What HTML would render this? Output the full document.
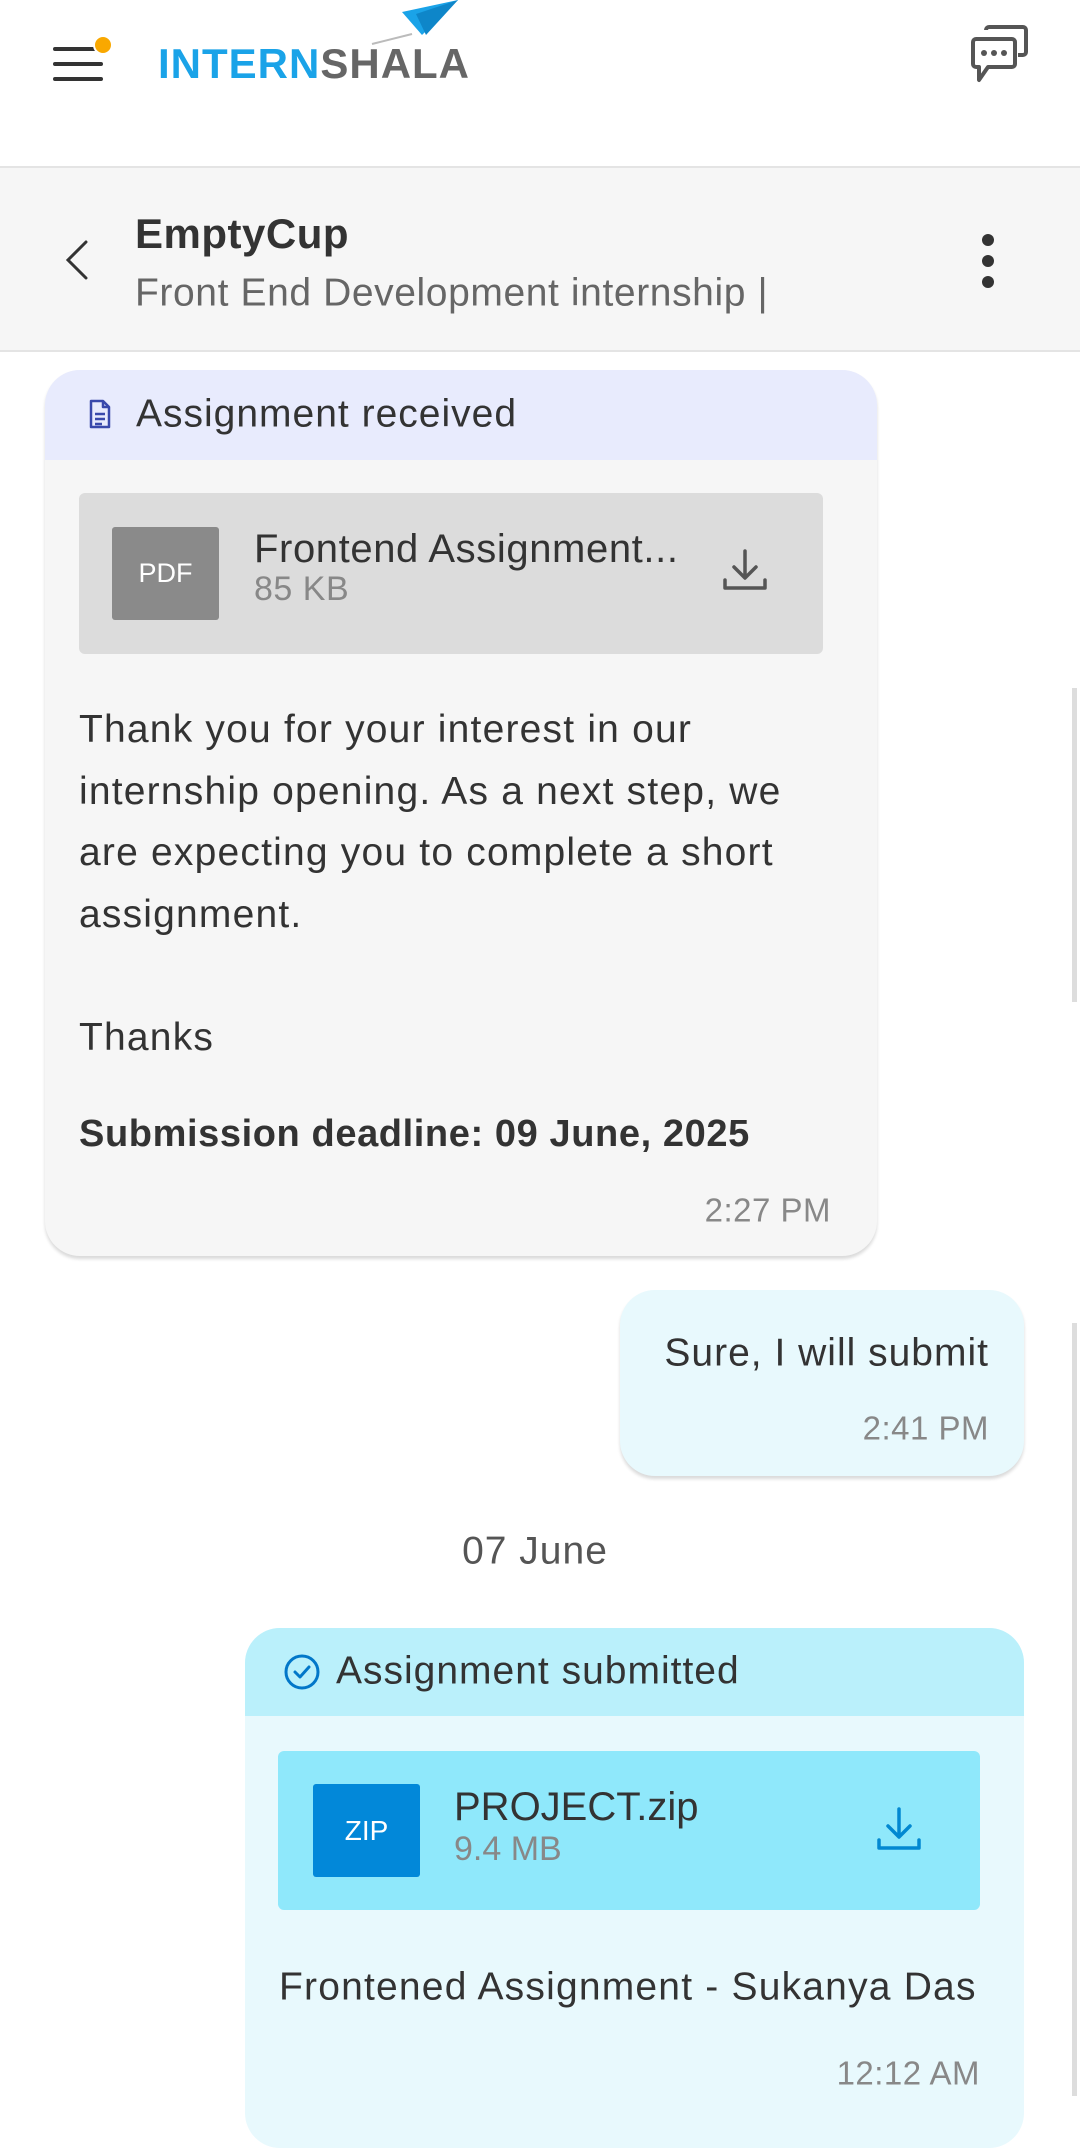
<!DOCTYPE html>
<html><head><meta charset="utf-8"><style>
*{margin:0;padding:0;box-sizing:border-box}
body{width:1080px;height:2096px;overflow:hidden;background:#fff;font-family:"Liberation Sans",sans-serif;color:#222;position:relative}
.a{position:absolute;white-space:nowrap}
.t{line-height:1;transform:translateY(-50%)}
</style></head><body>
<!-- top bar -->
<div class="a" style="left:53px;top:47px;width:50px;height:4px;background:#333;border-radius:2px"></div>
<div class="a" style="left:53px;top:62px;width:50px;height:4px;background:#333;border-radius:2px"></div>
<div class="a" style="left:53px;top:77px;width:50px;height:4px;background:#333;border-radius:2px"></div>
<div class="a" style="left:93px;top:35px;width:20px;height:20px;background:#f9a800;border-radius:50%;border:2px solid #fff"></div>
<div class="a t" style="left:158px;top:64px;font-size:42px;font-weight:bold;letter-spacing:1px"><span style="color:#1aa3e8">INTERN</span><span style="color:#666">SHALA</span></div>
<svg class="a" style="left:360px;top:0" width="100" height="50" viewBox="0 0 100 50"><polygon points="42,12 98,0 62,35" fill="#1aa3e8"/><polygon points="56,14 98,0 66,35" fill="#0e86c9"/><line x1="12" y1="44" x2="52" y2="34" stroke="#bbb" stroke-width="2"/></svg>
<svg class="a" style="left:968px;top:24px" width="64" height="64" viewBox="0 0 64 64" fill="none" stroke="#555" stroke-width="4" stroke-linejoin="round"><path d="M18 6a3 3 0 0 1 3-3h34a3 3 0 0 1 3 3v22a3 3 0 0 1-3 3h-5"/><path d="M5 18a3 3 0 0 1 3-3h36a3 3 0 0 1 3 3v22a3 3 0 0 1-3 3H20l-9 13v-13H8a3 3 0 0 1-3-3z" fill="#fff"/><circle cx="16" cy="29" r="3" fill="#555" stroke="none"/><circle cx="26" cy="29" r="3" fill="#555" stroke="none"/><circle cx="36" cy="29" r="3" fill="#555" stroke="none"/></svg>
<!-- chat header -->
<div class="a" style="left:0;top:166px;width:1080px;height:186px;background:#f6f6f6;border-top:2px solid #e4e4e4;border-bottom:2px solid #e4e4e4"></div>
<svg class="a" style="left:60px;top:238px" width="32" height="44" viewBox="0 0 32 44" fill="none" stroke="#333" stroke-width="3" stroke-linecap="round"><path d="M26 4L8 22l18 18"/></svg>
<div class="a t" style="left:135px;top:234px;font-size:42px;font-weight:bold;color:#333;letter-spacing:0.5px">EmptyCup</div>
<div class="a t" style="left:135px;top:293px;font-size:39px;color:#666;letter-spacing:0.6px">Front End Development internship |</div>
<div class="a" style="left:982px;top:234px;width:12px;height:12px;border-radius:50%;background:#333"></div>
<div class="a" style="left:982px;top:255px;width:12px;height:12px;border-radius:50%;background:#333"></div>
<div class="a" style="left:982px;top:276px;width:12px;height:12px;border-radius:50%;background:#333"></div>
<!-- scrollbars -->
<div class="a" style="left:1072px;top:688px;width:5px;height:314px;background:#ddd"></div>
<div class="a" style="left:1072px;top:1323px;width:5px;height:773px;background:#ddd"></div>
<!-- bubble 1 -->
<div class="a" style="left:45px;top:370px;width:832px;height:886px;background:#f6f6f6;border-radius:35px;overflow:hidden;box-shadow:0 3px 3px rgba(0,0,0,.15)">
<div style="height:90px;background:#e8ebfd"></div></div>
<svg class="a" style="left:88px;top:399px" width="24" height="30" viewBox="0 0 24 30" fill="none" stroke="#3949ab" stroke-width="2.5" stroke-linejoin="round"><path d="M3 2h12l6 6v20H3z"/><path d="M15 2v6h6M7 15h10M7 20h10M7 25h7"/></svg>
<div class="a t" style="left:136px;top:414px;font-size:39px;color:#333;letter-spacing:1px">Assignment received</div>
<div class="a" style="left:79px;top:493px;width:744px;height:161px;background:#dcdcdc;border-radius:6px"></div>
<div class="a" style="left:112px;top:527px;width:107px;height:93px;background:#8a8a8a;border-radius:3px;color:#fff;font-size:27px;line-height:93px;text-align:center">PDF</div>
<div class="a t" style="left:254px;top:549px;font-size:40px;color:#333;letter-spacing:0.6px">Frontend Assignment...</div>
<div class="a t" style="left:254px;top:589px;font-size:34px;color:#888;letter-spacing:0.5px">85 KB</div>
<svg class="a" style="left:720px;top:546px" width="50" height="50" viewBox="0 0 50 50" fill="none" stroke="#555" stroke-width="3.5" stroke-linecap="round" stroke-linejoin="round"><path d="M25 5v26M14 21l11 11 11-11M5 34v8h40v-8"/></svg>
<div class="a" style="left:79px;top:699px;font-size:39px;letter-spacing:1.2px;line-height:61.5px;color:#333">Thank you for your interest in our<br>internship opening. As a next step, we<br>are expecting you to complete a short<br>assignment.<br><br>Thanks</div>
<div class="a t" style="left:79px;top:1134px;font-size:38px;font-weight:bold;color:#333;letter-spacing:0.6px">Submission deadline: 09 June, 2025</div>
<div class="a t" style="right:249px;top:1210px;font-size:33px;color:#888;letter-spacing:0.5px">2:27 PM</div>
<!-- bubble 2 -->
<div class="a" style="left:620px;top:1290px;width:404px;height:186px;background:#e8f9fd;border-radius:35px;box-shadow:0 3px 3px rgba(0,0,0,.15)"></div>
<div class="a t" style="right:91px;top:1353px;font-size:39px;color:#333;letter-spacing:1px">Sure, I will submit</div>
<div class="a t" style="right:91px;top:1428px;font-size:33px;color:#888;letter-spacing:0.5px">2:41 PM</div>
<div class="a t" style="left:0;width:1070px;text-align:center;top:1551px;font-size:39px;color:#555;letter-spacing:1px">07 June</div>
<!-- bubble 3 -->
<div class="a" style="left:245px;top:1628px;width:779px;height:520px;background:#e8f9fd;border-radius:35px;overflow:hidden"><div style="height:88px;background:#baf0fb"></div></div>
<svg class="a" style="left:283px;top:1653px" width="38" height="38" viewBox="0 0 38 38" fill="none" stroke="#0277c9" stroke-width="3" stroke-linecap="round" stroke-linejoin="round"><circle cx="19" cy="19" r="16"/><path d="M12 19l5 5 9-10"/></svg>
<div class="a t" style="left:336px;top:1671px;font-size:39px;color:#333;letter-spacing:1px">Assignment submitted</div>
<div class="a" style="left:278px;top:1751px;width:702px;height:159px;background:#8fe8fb;border-radius:6px"></div>
<div class="a" style="left:313px;top:1784px;width:107px;height:93px;background:#0288d9;border-radius:3px;color:#fff;font-size:28px;line-height:93px;text-align:center">ZIP</div>
<div class="a t" style="left:454px;top:1807px;font-size:40px;color:#333">PROJECT.zip</div>
<div class="a t" style="left:454px;top:1849px;font-size:34px;color:#888">9.4 MB</div>
<svg class="a" style="left:874px;top:1805px" width="50" height="50" viewBox="0 0 50 50" fill="none" stroke="#0288d1" stroke-width="3.5" stroke-linecap="round" stroke-linejoin="round"><path d="M25 4v27M14 21l11 11 11-11M5 35v8h40v-8"/></svg>
<div class="a t" style="left:279px;top:1987px;font-size:39px;color:#333;letter-spacing:1.2px">Frontened Assignment - Sukanya Das</div>
<div class="a t" style="right:100px;top:2073px;font-size:33px;color:#888;letter-spacing:0.5px">12:12 AM</div>
</body></html>
